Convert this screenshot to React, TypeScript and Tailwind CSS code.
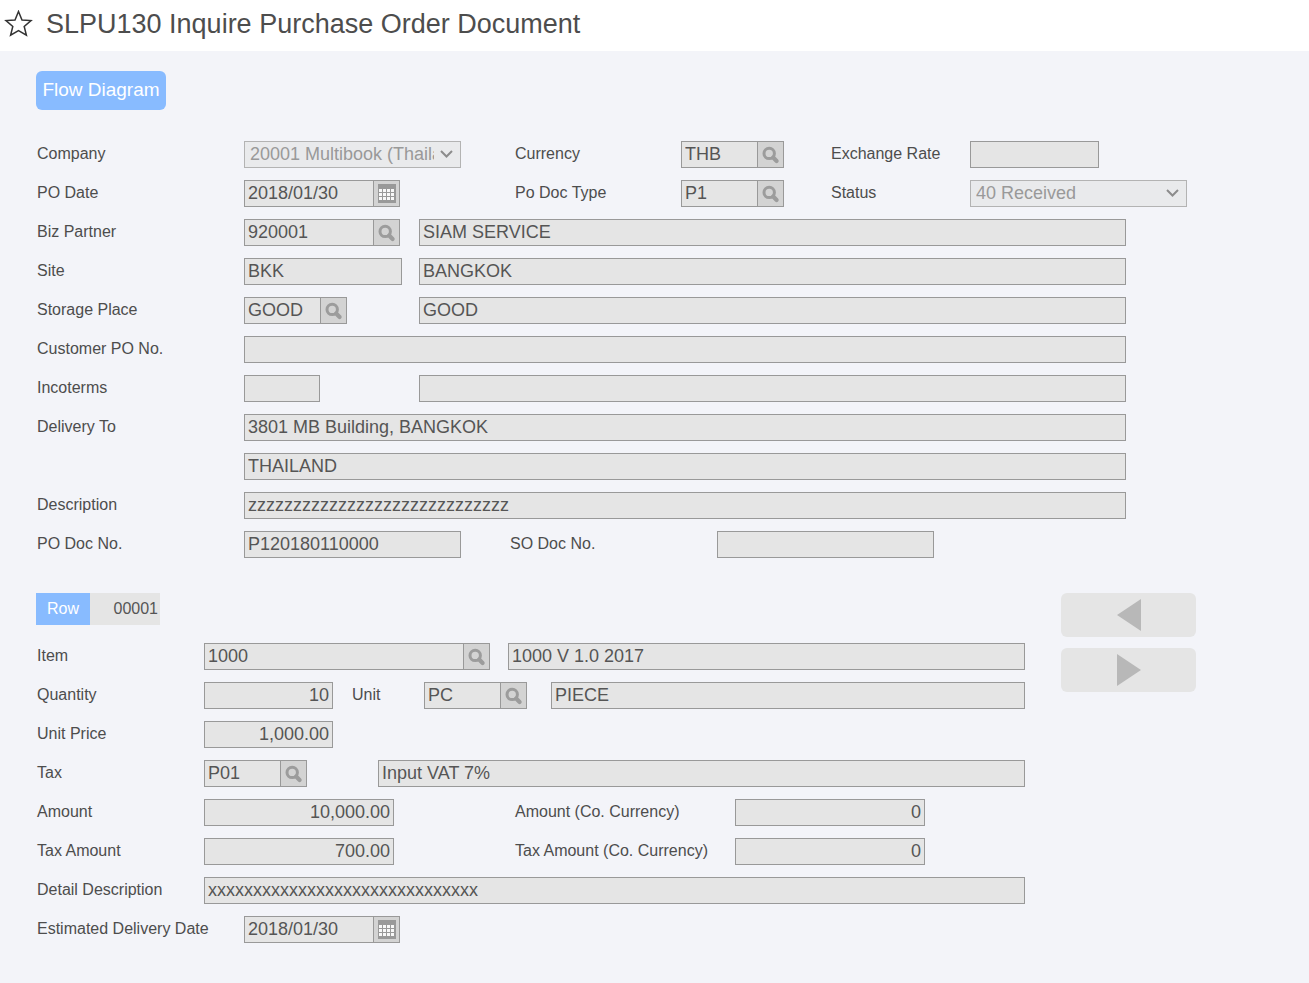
import type { ReactNode } from "react";
import clsx from "clsx";

const inputBase =
  "h-[27px] min-w-0 border border-[#999999] bg-[#e5e5e5] px-[3px] text-[18px] leading-5 text-[#555555] outline-none";

interface FieldProps {
  id?: string;
  label?: string;
  value?: string;
  className?: string;
}

function Label({ htmlFor, children, className }: { htmlFor: string; children: ReactNode; className?: string }) {
  return (
    <label htmlFor={htmlFor} className={clsx("shrink-0 pb-[2px] pl-px text-base leading-6 text-[#4d4d4d]", className)}>
      {children}
    </label>
  );
}

function TextField({ id, label, value = "", className }: FieldProps) {
  return <input id={id} type="text" readOnly aria-label={label} defaultValue={value} className={clsx(inputBase, className)} />;
}

function SearchIcon() {
  return (
    <svg width="18" height="18" viewBox="0 0 18 18" fill="none" stroke="#9c9c9c">
      <circle cx="7.2" cy="7.4" r="5.2" strokeWidth="3" />
      <path d="M11.2 11.6L14.6 15" strokeWidth="4.2" strokeLinecap="round" />
    </svg>
  );
}

function CalendarIcon() {
  return (
    <svg width="20" height="20" viewBox="0 0 20 20">
      <rect x="1" y="0" width="18" height="19" fill="#999999" />
      {[5, 9, 13].map((y) =>
        [2, 6, 10, 14].map((x) => <rect key={`${x}-${y}`} x={x} y={y} width="3" height="3" fill="#f8f8f8" />)
      )}
    </svg>
  );
}

function LookupField({ id, value = "", className, icon = "search" }: FieldProps & { icon?: "search" | "calendar" }) {
  return (
    <div className={clsx("flex h-[27px] border border-[#999999] bg-[#e5e5e5]", className)}>
      <input
        id={id}
        type="text"
        readOnly
        defaultValue={value}
        className="min-w-0 flex-1 bg-transparent px-[3px] pb-[2px] text-[18px] leading-5 text-[#555555] outline-none"
      />
      <button
        type="button"
        aria-label={icon === "search" ? "Search" : "Choose date"}
        className="flex w-[26px] shrink-0 items-center justify-center border-l border-[#999999] bg-[#d3d3d3]"
      >
        {icon === "search" ? <SearchIcon /> : <CalendarIcon />}
      </button>
    </div>
  );
}

function SelectField({ id, value }: { id: string; value: string }) {
  return (
    <div className="relative w-[217px]">
      <select
        id={id}
        disabled
        className="block h-[27px] w-full appearance-none border border-[#b3b3b3] bg-[#e9eaec] pr-[26px] pb-[2px] pl-[5px] text-[18px] leading-5 text-[#999999] opacity-100"
      >
        <option>{value}</option>
      </select>
      <svg
        className="pointer-events-none absolute top-[7px] right-2"
        width="13"
        height="12"
        viewBox="0 0 13 12"
        fill="none"
        stroke="#8c8c8c"
        strokeWidth="2"
      >
        <path d="M1 3L6.5 8.5L12 3" />
      </svg>
    </div>
  );
}

function HeaderSection() {
  return (
    <section className="flex flex-col gap-3">
      <div className="grid grid-cols-[208px_270px_167px_149px_140px_1fr] items-center gap-y-3">
        <Label htmlFor="company">Company</Label>
        <SelectField id="company" value="20001 Multibook (Thailand)" />
        <Label htmlFor="currency">Currency</Label>
        <LookupField id="currency" value="THB" className="w-[103px]" />
        <Label htmlFor="rate">Exchange Rate</Label>
        <TextField id="rate" className="w-[129px]" />

        <Label htmlFor="poDate">PO Date</Label>
        <LookupField id="poDate" value="2018/01/30" icon="calendar" className="w-[156px]" />
        <Label htmlFor="docType">Po Doc Type</Label>
        <LookupField id="docType" value="P1" className="w-[103px]" />
        <Label htmlFor="status">Status</Label>
        <SelectField id="status" value="40 Received" />
      </div>

      <div className="mr-[70px] grid grid-cols-[208px_175px_1fr] items-center gap-y-3">
        <Label htmlFor="partner">Biz Partner</Label>
        <LookupField id="partner" value="920001" className="w-[156px]" />
        <TextField label="Biz Partner Name" value="SIAM SERVICE" />

        <Label htmlFor="site">Site</Label>
        <TextField id="site" value="BKK" className="w-[158px]" />
        <TextField label="Site Name" value="BANGKOK" />

        <Label htmlFor="storage">Storage Place</Label>
        <LookupField id="storage" value="GOOD" className="w-[103px]" />
        <TextField label="Storage Place Name" value="GOOD" />

        <Label htmlFor="customerPo">Customer PO No.</Label>
        <TextField id="customerPo" className="col-span-2" />

        <Label htmlFor="incoterms">Incoterms</Label>
        <TextField id="incoterms" className="w-[76px]" />
        <TextField label="Incoterms Name" />

        <Label htmlFor="delivery">Delivery To</Label>
        <TextField id="delivery" value="3801 MB Building, BANGKOK" className="col-span-2" />
        <TextField label="Delivery To Line 2" value="THAILAND" className="col-span-2 col-start-2" />

        <Label htmlFor="description">Description</Label>
        <TextField id="description" value="zzzzzzzzzzzzzzzzzzzzzzzzzzzzz" className="col-span-2" />

        <Label htmlFor="poDocNo">PO Doc No.</Label>
        <div className="col-span-2 flex items-center">
          <TextField id="poDocNo" value="P120180110000" className="w-[217px]" />
          <Label htmlFor="soDocNo" className="ml-12 w-52">
            SO Doc No.
          </Label>
          <TextField id="soDocNo" className="w-[217px]" />
        </div>
      </div>
    </section>
  );
}

function DetailSection() {
  return (
    <section className="flex min-w-0 flex-1 flex-col">
      <div className="flex h-8 items-center self-start bg-[#e5e5e5]">
        <label htmlFor="row" className="flex h-full w-[54px] items-center justify-center bg-[#88bbff] text-base text-white">
          Row
        </label>
        <input
          id="row"
          type="text"
          readOnly
          defaultValue="00001"
          className="w-[70px] pr-[2px] text-right text-base text-[#555555] outline-none"
        />
      </div>

      <div className="mt-[18px] flex flex-col gap-3">
        <div className="flex items-center">
          <Label htmlFor="item" className="w-[168px]">Item</Label>
          <LookupField id="item" value="1000" className="w-[286px]" />
          <TextField label="Item Name" value="1000 V 1.0 2017" className="ml-[18px] flex-1" />
        </div>
        <div className="flex items-center">
          <Label htmlFor="quantity" className="w-[168px]">Quantity</Label>
          <TextField id="quantity" value="10" className="w-[129px] text-right" />
          <Label htmlFor="unit" className="ml-[18px] w-[73px]">Unit</Label>
          <LookupField id="unit" value="PC" className="w-[103px]" />
          <TextField label="Unit Name" value="PIECE" className="ml-6 flex-1" />
        </div>
        <div className="flex items-center">
          <Label htmlFor="unitPrice" className="w-[168px]">Unit Price</Label>
          <TextField id="unitPrice" value="1,000.00" className="w-[129px] text-right" />
        </div>
        <div className="flex items-center">
          <Label htmlFor="tax" className="w-[168px]">Tax</Label>
          <LookupField id="tax" value="P01" className="w-[103px]" />
          <TextField label="Tax Name" value="Input VAT 7%" className="ml-[71px] flex-1" />
        </div>
        <div className="grid grid-cols-[168px_310px_221px_1fr] items-center gap-y-3">
          <Label htmlFor="amount">Amount</Label>
          <TextField id="amount" value="10,000.00" className="w-[190px] text-right" />
          <Label htmlFor="amountCo">Amount (Co. Currency)</Label>
          <TextField id="amountCo" value="0" className="w-[190px] text-right" />

          <Label htmlFor="taxAmount">Tax Amount</Label>
          <TextField id="taxAmount" value="700.00" className="w-[190px] text-right" />
          <Label htmlFor="taxAmountCo">Tax Amount (Co. Currency)</Label>
          <TextField id="taxAmountCo" value="0" className="w-[190px] text-right" />
        </div>
        <div className="flex items-center">
          <Label htmlFor="detail" className="w-[168px]">Detail Description</Label>
          <TextField id="detail" value="xxxxxxxxxxxxxxxxxxxxxxxxxxxxxx" className="flex-1" />
        </div>
        <div className="flex items-center">
          <Label htmlFor="deliveryDate" className="w-52">Estimated Delivery Date</Label>
          <LookupField id="deliveryDate" value="2018/01/30" icon="calendar" className="w-[156px]" />
        </div>
      </div>
    </section>
  );
}

function NavButton({ label, points }: { label: string; points: string }) {
  return (
    <button type="button" aria-label={label} className="flex h-11 items-center justify-center rounded-md bg-[#e5e5e5]">
      <svg width="24" height="32" viewBox="0 0 24 32" fill="#b8b8b8">
        <polygon points={points} />
      </svg>
    </button>
  );
}

export default function App() {
  return (
    <div className="min-h-screen bg-[#f3f4f9] font-['Liberation_Sans',Arial,sans-serif]">
      <header className="flex h-[51px] items-center gap-3 bg-white pb-1 pl-1">
        <button type="button" aria-label="Add to favorites">
          <svg width="30" height="28" viewBox="0 0 30 28" fill="none" stroke="#333333" strokeWidth="1.5">
            <path d="M14.5 1.5L18 10L27 10.6L20.2 16.4L22.4 25.2L14.5 20.6L6.6 25.2L8.8 16.4L2 10.6L11 10Z" />
          </svg>
        </button>
        <h1 className="text-[27px] leading-8 text-[#4d4d4d]">SLPU130 Inquire Purchase Order Document</h1>
      </header>

      <main className="max-w-[1232px] px-9 pt-5 pb-10">
        <button type="button" className="h-[39px] w-[130px] rounded-md bg-[#88bbff] text-[19px] whitespace-nowrap text-white">
          Flow Diagram
        </button>
        <div className="mt-[31px]">
          <HeaderSection />
        </div>
        <div className="mt-[35px] flex items-start gap-9">
          <DetailSection />
          <nav className="flex w-[135px] shrink-0 flex-col gap-[11px]">
            <NavButton label="Previous row" points="24,0 24,32 0,16" />
            <NavButton label="Next row" points="0,0 24,16 0,32" />
          </nav>
        </div>
      </main>
    </div>
  );
}
